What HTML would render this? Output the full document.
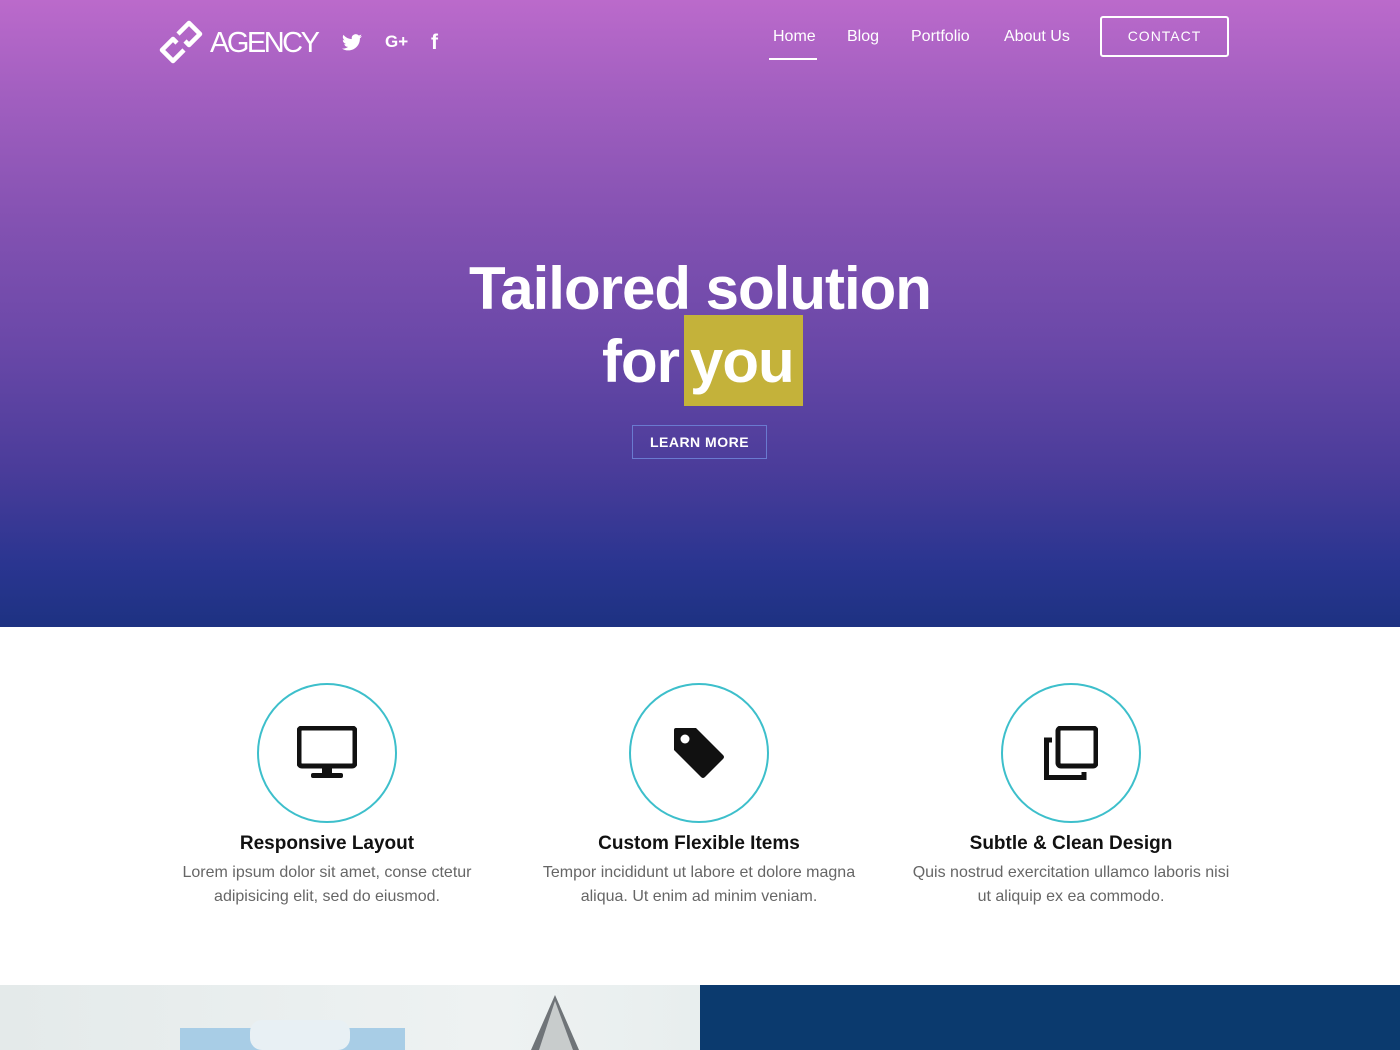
<!DOCTYPE html>
<html><head><meta charset="utf-8"><style>
*{margin:0;padding:0;box-sizing:border-box}
body{width:1400px;height:1050px;overflow:hidden;font-family:"Liberation Sans",sans-serif;background:#fff;position:relative}
.hero{position:absolute;left:0;top:0;width:1400px;height:627px;background:linear-gradient(180deg,#bb6acb 0%,#a25fc0 15%,#8452b2 35%,#6a48a8 55%,#4a3c9a 75%,#2a3590 90%,#1d3282 100%)}
.logo{position:absolute;left:158px;top:19px}
.brand{position:absolute;left:210px;top:27px;color:#fff;font-size:29px;letter-spacing:-2.5px}
.soc{position:absolute;top:30px;color:#fff;font-weight:bold;font-size:19px}
.nav a{position:absolute;top:27px;color:#fff;font-size:16px;text-decoration:none}
.contact{position:absolute;left:1100px;top:16px;width:129px;height:41px;border:2px solid #fff;border-radius:3px;color:#fff;font-size:14px;letter-spacing:1px;text-align:center;line-height:37px}
h1{position:absolute;left:0;width:1400px;text-align:center;color:#fff;font-size:60px;font-weight:bold;letter-spacing:-1px}
.you{position:absolute;left:684px;top:315px;width:119px;height:91px;background:#c4b23a}
.lm{position:absolute;left:632px;top:425px;width:135px;height:34px;border:1px solid #6a7ad0;color:#fff;font-size:14px;font-weight:bold;letter-spacing:.5px;text-align:center;line-height:32px}
.f{position:absolute;top:683px;width:400px;text-align:center}
.c{width:140px;height:140px;border:2px solid #3dbfcb;border-radius:50%;margin:0 auto;display:flex;align-items:center;justify-content:center}
.f h3{margin-top:10px;font-size:19px;color:#111}
.f p{margin-top:6px;font-size:16px;color:#666;line-height:24px}
</style></head><body>
<div class="hero"></div>
<svg class="logo" width="46" height="46" viewBox="0 0 46 46"><g fill="none" stroke="#fff" stroke-width="4.5" stroke-linejoin="round"><path d="M20 15 L31 4 L42 15 L31 26 L27 22"/><path d="M26 31 L15 42 L4 31 L15 20 L19 24"/></g></svg>
<div class="brand">AGENCY</div>
<svg style="position:absolute;left:342px;top:34px" width="20" height="17" viewBox="0 0 24 20"><path fill="#fff" d="M24 2.4a10 10 0 0 1-2.8.8A5 5 0 0 0 23.3.4a10 10 0 0 1-3.1 1.2A4.9 4.9 0 0 0 11.8 6 14 14 0 0 1 1.7.9a4.9 4.9 0 0 0 1.5 6.6A5 5 0 0 1 1 6.9a4.9 4.9 0 0 0 3.9 4.9 5 5 0 0 1-2.2.1 4.9 4.9 0 0 0 4.6 3.4A9.9 9.9 0 0 1 0 17.3 14 14 0 0 0 7.5 19.5c9 0 14-7.5 14-14v-.6A10 10 0 0 0 24 2.4z"/></svg>
<div class="soc" style="left:385px;top:32px;font-size:17px">G+</div>
<div class="soc" style="left:431px;top:31px;font-size:21px">f</div>
<div class="nav"><a style="left:773px;top:28px">Home</a><a style="left:847px;top:28px">Blog</a><a style="left:911px;top:28px">Portfolio</a><a style="left:1004px;top:28px">About Us</a></div>
<div style="position:absolute;left:769px;top:58px;width:48px;height:2px;background:#fff"></div>
<div class="contact">CONTACT</div>
<div class="you"></div>
<h1 style="top:254px">Tailored solution</h1>
<div style="position:absolute;left:602px;top:327px;color:#fff;font-size:60px;font-weight:bold;letter-spacing:-1px">for</div>
<div style="position:absolute;left:690px;top:327px;color:#fff;font-size:60px;font-weight:bold;letter-spacing:-1px">you</div>
<div class="lm">LEARN MORE</div>
<div class="f" style="left:127px"><div class="c"><svg width="60" height="54" viewBox="0 0 60 54"><rect x="2" y="2" width="56" height="38" rx="3" fill="none" stroke="#111" stroke-width="5"/><rect x="25" y="40" width="10" height="8" fill="#111"/><rect x="14" y="47" width="32" height="5" rx="2" fill="#111"/></svg></div><h3>Responsive Layout</h3><p>Lorem ipsum dolor sit amet, conse ctetur<br>adipisicing elit, sed do eiusmod.</p></div>
<div class="f" style="left:499px"><div class="c"><svg width="54" height="54" viewBox="0 0 54 54"><path fill="#111" d="M2 4 Q2 2 4 2 L24 2 L51 29 Q53 31 51 33 L33 51 Q31 53 29 51 L2 24Z"/><circle cx="13" cy="13" r="4.5" fill="#fff"/></svg></div><h3>Custom Flexible Items</h3><p>Tempor incididunt ut labore et dolore magna<br>aliqua. Ut enim ad minim veniam.</p></div>
<div class="f" style="left:871px"><div class="c"><svg width="54" height="54" viewBox="0 0 54 54"><rect x="14" y="2" width="38" height="38" rx="3" fill="none" stroke="#111" stroke-width="5"/><path d="M8 14 L2.5 14 L2.5 51.5 L40 51.5 L40 46" fill="none" stroke="#111" stroke-width="5"/></svg></div><h3>Subtle &amp; Clean Design</h3><p>Quis nostrud exercitation ullamco laboris nisi<br>ut aliquip ex ea commodo.</p></div>
<div style="position:absolute;left:0;top:985px;width:700px;height:65px;background:linear-gradient(90deg,#e4eaea,#eef2f2 70%,#e8eeee)"></div>
<div style="position:absolute;left:180px;top:1028px;width:225px;height:22px;background:#a8cde6"></div>
<div style="position:absolute;left:250px;top:1020px;width:100px;height:30px;background:#e8f0f4;border-radius:12px"></div>
<svg style="position:absolute;left:515px;top:995px" width="80" height="55"><path d="M40 0 L64 55 L16 55Z" fill="#6f7478"/><path d="M40 6 L58 55 L24 55Z" fill="#c8cccc"/></svg>
<div style="position:absolute;left:700px;top:985px;width:700px;height:65px;background:#0b3a6e"></div>
</body></html>
